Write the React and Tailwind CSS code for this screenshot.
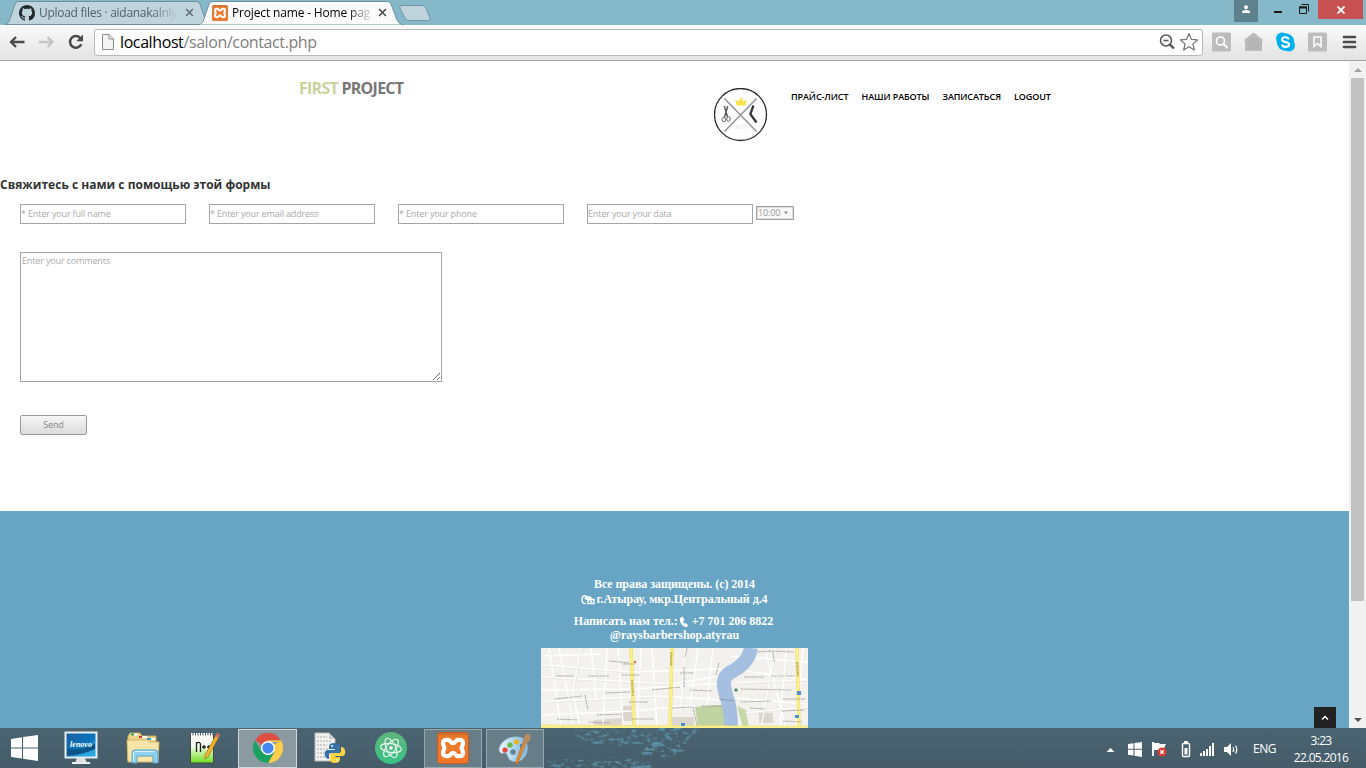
import React from "react";

const XamppGlyph = ({ className }) => (
  <svg viewBox="0 0 32 32" className={className}>
    <defs>
      <linearGradient id="xg" x1="0" y1="0" x2="0" y2="1">
        <stop offset="0" stopColor="#c9662c" />
        <stop offset="0.15" stopColor="#ee7a2a" />
        <stop offset="1" stopColor="#f0772a" />
      </linearGradient>
    </defs>
    <rect x="0.5" y="0.5" width="31" height="31" rx="3" fill="url(#xg)" stroke="#c55a1c" />
    <path
      d="M9.500 7.800h1.500c2.500 0 2.500 3.400 5 3.400s2.500-3.400 5-3.400h1.500q3.500 0 3.500 3.400c0 2.800-1.400 3-1.400 4.800s1.400 2 1.400 4.800q0 3.400-3.500 3.400h-1.500c-2.500 0-2.500-3.400-5-3.400s-2.500 3.400-5 3.400h-1.500q-3.500 0-3.500-3.400c0-2.800 1.400-3 1.400-4.800s-1.400-2-1.400-4.800q0-3.400 3.500-3.400z"
      fill="none"
      stroke="#fff"
      strokeWidth="4.200"
      strokeLinejoin="round"
    />
  </svg>
);

const Cross = ({ className }) => (
  <svg viewBox="0 0 10 10" className={className}>
    <path d="M1.200 1.200l7.600 7.600M8.800 1.200l-7.600 7.600" stroke="currentColor" strokeWidth="1.700" />
  </svg>
);

const GithubMark = () => (
  <svg viewBox="0 0 16 16" className="h-4 w-4 shrink-0" fill="#24292e">
    <path d="M8 0C3.580 0 0 3.580 0 8c0 3.540 2.290 6.530 5.470 7.590.4.070.55-.17.55-.38 0-.19-.01-.82-.01-1.490-2.010.37-2.530-.49-2.690-.94-.09-.23-.48-.94-.82-1.130-.28-.15-.68-.52-.01-.53.63-.01 1.080.58 1.230.82.72 1.210 1.870.87 2.330.66.07-.52.28-.87.51-1.070-1.780-.2-3.640-.89-3.640-3.950 0-.87.31-1.590.82-2.150-.08-.2-.36-1.020.08-2.120 0 0 .67-.21 2.200.82.64-.18 1.320-.27 2-.27s1.360.09 2 .27c1.530-1.040 2.200-.82 2.200-.82.44 1.100.16 1.920.08 2.120.51.56.82 1.270.82 2.150 0 3.070-1.870 3.750-3.650 3.950.29.25.54.73.54 1.480 0 1.070-.01 1.930-.01 2.200 0 .21.15.46.55.38A8.010 8.010 0 0 0 16 8c0-4.420-3.580-8-8-8z" />
  </svg>
);

function TabStrip() {
  return (
    <div className="flex h-[25px] bg-[#85b8c9] font-['Open_Sans',sans-serif]">
      <div className="relative ml-[5px] h-[25px] w-[200px] shrink-0">
        <svg viewBox="0 0 200 25" className="absolute inset-0 h-[25px] w-[200px]">
          <path d="M0 24.500C3 24 4 22 5 19L10 4Q11 1.500 13 1.500H191Q194 1.500 195 4L200 19V24.500z" fill="#c0d4dd" stroke="#6f8f9c" />
        </svg>
        <div className="relative flex h-[25px] items-center pl-[14px]">
          <GithubMark />
          <span className="ml-1 w-[138px] whitespace-nowrap text-[12px] leading-4 tracking-[-0.28px] text-[#536068] [mask-image:linear-gradient(to_right,#000_112px,transparent_139px)]">
            Upload files · aidanakalniy
          </span>
          <Cross className="ml-[8px] h-[9px] w-[9px] text-[#5f6b70]" />
        </div>
      </div>
      <div className="relative -ml-[7px] h-[25px] w-[206px] shrink-0">
        <svg viewBox="0 0 206 25" className="absolute inset-0 h-[25px] w-[206px]">
          <path d="M0 25C4 24 5 22 6 19L11 4Q12 1.500 15 1.500H189Q192 1.500 193 4L199 20Q201 24.500 206 25z" fill="#fbfbfb" stroke="#6f8f9c" />
        </svg>
        <div className="relative flex h-[25px] items-center pl-[14px]">
          <XamppGlyph className="h-4 w-4 shrink-0" />
          <span className="ml-1 w-[138px] whitespace-nowrap text-[12px] leading-4 tracking-[-0.16px] text-black [mask-image:linear-gradient(to_right,#000_116px,transparent_141px)]">
            Project name - Home pag
          </span>
          <Cross className="ml-[8px] h-[9px] w-[9px] text-[#444]" />
        </div>
      </div>
      <svg viewBox="0 0 34 25" className="-ml-[6px] h-[25px] w-[34px] shrink-0">
        <path d="M3 5.500H25Q27 5.500 28 8L32 18Q33 20.500 30 20.500H11Q8 20.500 7 18L2 8Q1 5.500 3 5.500z" fill="#bfd3dc" stroke="#7597a5" />
      </svg>
      <div className="ml-auto flex">
        <div className="flex h-[22px] w-6 items-start justify-center bg-[#5d818d] pt-[5px]">
          <svg viewBox="0 0 8 9" className="h-[9px] w-2" fill="#fff">
            <circle cx="4" cy="2.200" r="2" />
            <path d="M0 8V6.200Q2 5 4 5t4 1.200V8z" />
          </svg>
        </div>
        <svg viewBox="0 0 60 22" className="h-[22px] w-[60px]" fill="none" stroke="#1c1c1c">
          <path d="M16 12h8" strokeWidth="2" />
          <path d="M43.500 4.500h7v7M41.500 7.500h7v6h-7zM41 7h8" />
          <path d="M41 7.500h8" strokeWidth="2" />
        </svg>
        <div className="mr-[3px] flex h-[19px] w-[45px] items-center justify-center bg-[#c75050]">
          <svg viewBox="0 0 8 8" className="h-2 w-2">
            <path d="M.5.500l7 7M7.500.500l-7 7" stroke="#fff" strokeWidth="1.900" />
          </svg>
        </div>
      </div>
    </div>
  );
}

function Toolbar() {
  return (
    <div className="flex h-9 items-center border-b border-[#a5a5a5] bg-linear-to-b from-[#fafafa] to-[#e3e3e3] pb-px pl-2 pr-[9px] [box-shadow:inset_0_1px_0_#fff]">
      <svg viewBox="0 0 84 20" className="h-5 w-[84px]" fill="none">
        <path d="M8 5L3 10 8 15M3.500 10h13" stroke="#4b4b4b" strokeWidth="2.400" />
        <path d="M39.500 5L44.500 10l-5 5M44 10H31" stroke="#c4c4c4" strokeWidth="2.400" />
        <path d="M72.600 6.200A5.900 5.900 0 1 0 73.300 12.300" stroke="#4b4b4b" strokeWidth="2.500" />
        <path d="M75 2.500v6.800h-6.800z" fill="#4b4b4b" />
      </svg>
      <div className="ml-[2px] flex h-[27px] flex-1 items-center rounded-[3px] border border-[#b8b8b8] bg-white pl-[7px] pr-[3px]">
        <svg viewBox="0 0 12 16" className="h-4 w-3" fill="#f5f5f5" stroke="#8b8b8b">
          <path d="M.5.500h6.500l4.500 4.500v10.500H.5zM7 .5V5h4.500" />
        </svg>
        <span className="ml-[6px] whitespace-nowrap font-['Open_Sans',sans-serif] text-[16px] leading-5 tracking-[-0.4px] text-[#808080]">
          <span className="text-black">localhost</span>/salon/contact.php
        </span>
        <svg viewBox="0 0 18 18" className="ml-auto h-[18px] w-[18px]" fill="none" stroke="#555">
          <circle cx="8" cy="7.500" r="5.500" strokeWidth="1.500" />
          <path d="M5.500 7.500h5" strokeWidth="1.600" />
          <path d="M11.800 11.300L16 15.500" strokeWidth="2.400" />
        </svg>
        <svg viewBox="0 0 20 20" className="ml-[3px] h-5 w-5" fill="#fff" stroke="#747474" strokeWidth="1.200" strokeLinejoin="round">
          <path d="M10 1.600l2.400 5.800 6.200.5-4.700 4.100 1.500 6.100-5.400-3.300-5.400 3.300 1.500-6.100L1.400 7.900l6.200-.5z" />
        </svg>
      </div>
      <svg viewBox="0 0 147 20" className="ml-[7px] h-5 w-[147px]" fill="none">
        <rect x="2" y=".5" width="19" height="19" rx="1.500" fill="#bcbcbc" />
        <circle cx="10.500" cy="9" r="4" stroke="#fff" strokeWidth="1.600" />
        <path d="M13.500 12l4 4" stroke="#fff" strokeWidth="2" />
        <path d="M43.500.500l9.500 7.500-1 2v9H35v-9l-1-2z" fill="#bababa" />
        <circle cx="43.500" cy="11.500" r="5" stroke="#a9a9a9" />
        <circle cx="43.500" cy="11.500" r="2.300" stroke="#a9a9a9" />
        <circle cx="72" cy="6.500" r="6" fill="#00aff0" />
        <circle cx="79" cy="13.500" r="6" fill="#00aff0" />
        <circle cx="75.500" cy="10" r="8.700" fill="#00aff0" />
        <path d="M79 7.200Q78 5.300 75.200 5.300 72 5.300 72 7.600 72 9.300 75.500 10t3.600 2.500q0 2.400-3.500 2.400-3 0-3.900-2.300" stroke="#fff" strokeWidth="2.100" />
        <rect x="98" y=".5" width="19" height="19" rx="1.500" fill="#bcbcbc" />
        <path d="M104 5h7v9.500l-3.500-3-3.500 3z" stroke="#fff" strokeWidth="1.500" />
        <path d="M134 5h11M134 10h11M134 15h11" stroke="#4b4b4b" strokeWidth="2.700" strokeLinecap="round" />
      </svg>
    </div>
  );
}

function BarberLogo() {
  return (
    <svg viewBox="0 0 54 54" className="h-[54px] w-[54px]" fill="none">
      <circle cx="26.500" cy="26.500" r="26" stroke="#2b2b2b" strokeWidth="1.300" />
      <path d="M10.500 10.500l32 33M42.500 10.500L10.500 43.500" stroke="#999" strokeWidth="1.700" />
      <path d="M22.500 17.500l-1.300-6 3.300 2L27 9l2.500 4.500 3.300-2-1.300 6z" fill="#fbe14b" />
      <path d="M10.300 18l3.200 11M13.800 18l-3.200 11" stroke="#555" strokeWidth="1.400" />
      <ellipse cx="9.800" cy="31.500" rx="1.800" ry="2.300" stroke="#666" />
      <ellipse cx="14.500" cy="31" rx="1.800" ry="2.300" stroke="#666" />
      <path d="M39.500 17.500L36.300 26l6.200 8.500" stroke="#333" strokeWidth="2.200" />
      <text x="27" y="41" textAnchor="middle" fontFamily="Open Sans" fontSize="5" fill="#dedede">2015</text>
    </svg>
  );
}

function Header() {
  return (
    <header className="flex h-[116px] font-['Open_Sans',sans-serif]">
      <h1 className="ml-[299px] mt-[17px] w-[415px] text-[16px] font-bold leading-5 tracking-[-0.74px] text-[#777]">
        <span className="text-[#c9d19b]">FIRST</span> PROJECT
      </h1>
      <div className="mt-[27px]"><BarberLogo /></div>
      <nav className="ml-[23px] mt-[30px] flex h-3 gap-[13px] whitespace-nowrap text-[9px] font-semibold leading-3 tracking-[-0.08px] text-black">
        <a>ПРАЙС-ЛИСТ</a>
        <a>НАШИ РАБОТЫ</a>
        <a>ЗАПИСАТЬСЯ</a>
        <a>LOGOUT</a>
      </nav>
    </header>
  );
}

const fields = ["* Enter your full name", "* Enter your email address", "* Enter your phone", "Enter your your data"];

function ContactForm() {
  return (
    <form className="h-[334px] font-['Open_Sans',sans-serif] text-[9px] tracking-[-0.15px]">
      <h2 className="text-[12px] font-bold leading-4 tracking-[0.01px] text-[#333]">
        Свяжитесь с нами с помощью этой формы
      </h2>
      <div className="ml-5 mt-[11px] flex">
        {fields.map((label) => (
          <input
            key={label}
            placeholder={label}
            className="mr-[23px] block h-5 w-[166px] border border-[#a5a5a5] bg-white p-0 pb-[2px] leading-4 placeholder:text-[#a9a9a9] last-of-type:mr-[3px]"
          />
        ))}
        <div className="mt-[2px] flex h-[14px] w-[38px] items-center border border-[#a0a0a0] bg-[#f8f8f8] pl-px text-[#999] shadow-[inset_0_0_0_1px_#ddd]">
          10:00
          <svg viewBox="0 0 4 4" className="ml-[4px] h-1 w-1" fill="#777"><path d="M.3.500h3.400L2 3.300z" /></svg>
        </div>
      </div>
      <textarea
        placeholder="Enter your comments"
        className="ml-5 mt-7 block h-[130px] w-[422px] border border-[#a5a5a5] bg-white px-px py-[2px] leading-3 placeholder:text-[#a9a9a9]"
      />
      <button type="button" className="ml-5 mt-[33px] block h-5 w-[67px] rounded-[2px] border border-[#999] bg-linear-to-b from-[#f6f6f6] to-[#dcdcdc] leading-[18px] text-[#888]">
        Send
      </button>
    </form>
  );
}

function CityMap() {
  return (
    <svg viewBox="0 0 267 80" className="h-20 w-[267px]" fill="none">
      <rect width="267" height="80" fill="#f3f1ed" />
      <path d="M154 59l39-3 2 24h-38z" fill="#bfd4a0" />
      <path d="M196 58l9 4 3 18h-6z" fill="#c6d9aa" />
      <path d="M82 58h10v15H80zM53 72l28-2v10H52zM131 69h22v11h-22zM218 65h14v10h-14z" fill="#dcd6cf" />
      <g stroke="#fff" strokeWidth="1.300">
        <path d="M0 17l90 7 90-3M0 29l130 7 50-8M0 42l90-1 92-6M0 54l120-6 62 4M0 67l90-4 65-6M185 20l82 12M195 35l72-3M195 50l72 6M205 65l62-6M190 8l77 6M0 8l60-2" />
        <path d="M8 0l12 78M18 0l14 75M40 0l-8 45 6 30M50 0l5 50M66 0l-4 76M77 0l5 75M100 0l-4 80M111 0l5 80M145 0l-5 65M157 0l-8 58M172 0l-6 58M235 0l-14 75M245 0l-6 78M225 5l20 75M262 0l-7 80" />
      </g>
      <g stroke="#dddad5" strokeWidth=".5">
        <path d="M0 18l90 7M0 30l130 7M0 55l120-6M195 36l72-3M205 66l62-6M41 0l-8 45M146 0l-5 65M236 0l-14 75" />
      </g>
      <path d="M210 0Q208 14 192 23C180 28 182 38 186 50Q190 62 190 80" stroke="#a4bfdf" strokeWidth="14" />
      <path d="M90 0l3 78M131 0l-2 80M256 0l2 80M0 78.500l267 1" stroke="#e9d86a" strokeWidth="3.400" />
      <path d="M90 0l3 78M131 0l-2 80M256 0l2 80M0 78.500l267 1" stroke="#fbf08a" strokeWidth="2.600" />
      <g stroke="#77736f" strokeWidth="1" strokeDasharray="2 .6 3 .5 1 .5" opacity=".55">
        <path d="M68 13l20 2M82 16h12M15 28h18M48 28h20M81 27h18M14 51l27-3M64 45l25-1M111 42l28-3M56 67l25-1M131 60l20-1M16 71l20 1M139 25h14M149 42l22 1M200 41l50 1M203 29h20M230 28h24M217 4l12-1M228 3l25 1M200 54l30-1M178 51l16 2M161 58h20M209 60l15 1M242 51h23M241 63l23-1M91 71h22M48 74l20 1M143 19v20M44 47l3 15M175 27l3-12M146 0l-2 9M152 59l4 19M232 4l1 10M242 73l19 1M88 54h19" />
        <path d="M91 32l1 16M130.500 4l-.5 14M256 14l1 15" stroke="#9a842b" strokeWidth="2" />
      </g>
      <g fill="#4d8fd0"><rect x="140" y="75" width="4" height="3" /><rect x="256" y="43" width="4" height="4" /><rect x="254" y="67" width="4" height="3" /><circle cx="195" cy="42" r="1.700" fill="#4e8c6c" /><circle cx="94" cy="14" r="1.200" fill="#c17a36" /></g>
    </svg>
  );
}

function Footer() {
  return (
    <footer className="flex h-[217px] flex-col items-center bg-[#68a4c4] font-['Liberation_Serif',serif] text-[12px] font-bold tracking-[-0.06px] text-white">
      <p className="mt-[66px] h-[15px] whitespace-nowrap leading-[15px]">Все права защищены. (с) 2014</p>
      <p className="flex h-[15px] items-center whitespace-nowrap leading-[15px]">
        <svg viewBox="0 0 15 10" className="h-[10px] w-[15px]" fill="none" stroke="#fff" strokeWidth="1.400">
          <path d="M5 1Q1 0 1 4.500T5 8.500M4 2h5l2 2M7 4v4.500h6V4.500H9M9 6.500h2" />
          <path d="M4 2.500l5 2" strokeWidth="3" />
        </svg>
        г.Атырау, мкр.Центральный д.4
      </p>
      <p className="mt-[7px] flex h-[15px] items-center whitespace-nowrap pr-[2px] leading-[15px] tracking-[-0.03px]">
        Написать нам тел.:
        <svg viewBox="0 0 10 12" className="mx-px h-3 w-[10px]" fill="#fff">
          <path d="M3.500.500L1 2C0 6 3 10 7 11.500L9.500 9.500 6.700 7 5.500 7.800Q4.300 6.500 4.200 5L5.500 4z" />
        </svg>
        <span className="ml-[2px]">+7 701 206 8822</span>
      </p>
      <p className="h-[14px] leading-[13px] tracking-normal">@raysbarbershop.atyrau</p>
      <div className="mt-[5px] h-20 w-[267px]"><CityMap /></div>
    </footer>
  );
}

const WindowsMark = ({ className }) => (
  <svg viewBox="0 0 27 26" className={className} fill="#fff">
    <path d="M0 4l11-1.700v10.200H0zM12 2.100L27 0v12.500H12zM0 13.500h11v10L0 22zM12 13.500h15V26l-15-2.200z" />
  </svg>
);

const LenovoIcon = () => (
  <svg viewBox="0 0 34 34" className="h-[34px] w-[34px]">
    <defs><linearGradient id="lg" x1="0" y1="0" x2="1" y2="1"><stop stopColor="#1c5f9d" /><stop offset=".55" stopColor="#0874bd" /><stop offset="1" stopColor="#45bdf0" /></linearGradient></defs>
    <path d="M13 27h8l2 5H11z" fill="#dce1e3" /><path d="M8 32h18" stroke="#eee" strokeWidth="2" />
    <rect x="1.500" y="1.500" width="31" height="25" fill="url(#lg)" stroke="#e8eef0" strokeWidth="2" />
    <path d="M3 18Q18 20 31 13v12H3z" fill="#0c5488" />
    <path d="M3 25Q18 24 31 18v7z" fill="#28a6e0" />
    <text x="17" y="15.500" textAnchor="middle" fontFamily="Liberation Serif" fontSize="8" fontWeight="700" fontStyle="italic" fill="#fff">lenovo</text>
  </svg>
);

const FolderIcon = () => (
  <svg viewBox="0 0 34 32" className="h-8 w-[34px]">
    <path d="M2 4l2-3h10l2 3h14v24H2z" fill="#efd489" stroke="#c4a65a" />
    <path d="M5 2.500h7M13 5h8M21 7h8" stroke="#fff" strokeWidth="2" />
    <path d="M5 2.500h3" stroke="#1ca34a" strokeWidth="2" /><path d="M13 5h3" stroke="#d8382d" strokeWidth="2" /><path d="M21 7h4" stroke="#2a9be0" strokeWidth="2" />
    <path d="M1 8h20l2 2h10l-1 20H2z" fill="#f7e5a9" stroke="#d4b96e" />
    <path d="M6 31V21q0-3 3-3h20q3 0 3 3v10h-5v-7H11v7z" fill="#8fd0ee" stroke="#5aa3c8" />
    <path d="M7.500 29v-8q0-1.500 2-1.500h19" fill="none" stroke="#d8f2fb" />
  </svg>
);

const NotepadIcon = () => (
  <svg viewBox="0 0 32 32" className="h-8 w-8">
    <defs><linearGradient id="ng" x1="0" y1="0" x2="0" y2="1"><stop stopColor="#fff" /><stop offset=".4" stopColor="#f3faeb" /><stop offset="1" stopColor="#6fe01b" /></linearGradient></defs>
    <rect x="1.500" y="3" width="23" height="28" fill="url(#ng)" stroke="#444" />
    <path d="M2 2.500h22" stroke="#fff" strokeWidth="3" strokeDasharray="1.500 1" />
    <path d="M7.500 20V10M7.500 11q4-2 4 2v7M13 15h4M15 13v4M18 15h4M20 13v4" fill="none" stroke="#222" strokeWidth="1.300" />
    <path d="M28 1l3 2-12 22-3 2 0-4z" fill="#f1b62c" stroke="#996d21" strokeWidth=".7" /><path d="M28 1l3 2-2 3-3-2z" fill="#c96d6d" />
  </svg>
);

const ChromeIcon = () => (
  <svg viewBox="0 0 30 30" className="h-[30px] w-[30px]">
    <path d="M15 15L2 7.500A15 15 0 0 1 28 7.500H15z" fill="#dd4f43" />
    <path d="M15 15L28 7.500A15 15 0 0 1 15 30L21.500 18.700z" fill="#fccd48" />
    <path d="M15 15l6.500 3.700L15 30A15 15 0 0 1 2 7.500l6.500 11.200z" fill="#1aa260" />
    <path d="M15 7.500h13A15 15 0 0 1 29 9H15z" fill="#fccd48" />
    <circle cx="15" cy="15" r="7" fill="#fff" /><circle cx="15" cy="15" r="5.600" fill="#4688f1" />
  </svg>
);

const PythonIcon = () => (
  <svg viewBox="0 0 32 32" className="h-8 w-8">
    <path d="M1 1h14l6 6v22H1z" fill="#f1f1ef" stroke="#bbb" /><path d="M15 1v6h6z" fill="#ccc" />
    <path d="M3 5h10M3 9h14M3 13h10M3 17h12M3 21h8M3 25h9" stroke="#aaa" strokeDasharray="2 1" />
    <path d="M20 11q-5 0-5 4v2h6v1h-8q-3 1-2 6 1 3 4 3v-4q0-2 3-2h5q3 0 3-3v-3q0-4-6-4z" fill="#3773a6" />
    <path d="M21 31q5 0 5-4v-2h-5v-1h7q4 0 3-6-1-3-4-3v4q0 2-3 2h-5q-3 0-3 3v3q0 4 5 4z" fill="#ffd440" />
    <circle cx="18" cy="14" r="1" fill="#fff" /><circle cx="23.500" cy="28" r="1" fill="#fff" />
  </svg>
);

const AtomIcon = () => (
  <svg viewBox="0 0 32 32" className="h-8 w-8" fill="none">
    <defs><linearGradient id="ag" x1="0" y1="0" x2="0" y2="1"><stop stopColor="#5fb57d" /><stop offset="1" stopColor="#38c284" /></linearGradient></defs>
    <circle cx="16" cy="16" r="16" fill="url(#ag)" />
    <g stroke="#e5f6eb" strokeWidth="1.200"><ellipse cx="16" cy="16" rx="4.500" ry="10.500" transform="rotate(-25 16 16)" /><ellipse cx="16" cy="16" rx="4.500" ry="10.500" transform="rotate(38 16 16)" /><ellipse cx="16" cy="16" rx="4.500" ry="10.500" transform="rotate(98 16 16)" /></g>
    <circle cx="16" cy="16" r="1.800" fill="#fff" />
  </svg>
);

const PaintIcon = () => (
  <svg viewBox="0 0 34 32" className="h-8 w-[34px]">
    <defs><linearGradient id="pg"><stop stopColor="#eef6fc" /><stop offset="1" stopColor="#73b7e4" /></linearGradient></defs>
    <path d="M18 5C6 5-1 15 2 20c2 3 5-1 7 2s0 5 6 7c9 2 15-6 14-15Q28 5 18 5z" fill="url(#pg)" stroke="#a6c9dd" />
    <circle cx="15" cy="20" r="2.700" fill="#668392" />
    <circle cx="7" cy="18" r="2.600" fill="#e54639" /><circle cx="12" cy="13" r="2.600" fill="#63bb3c" /><circle cx="18.500" cy="10" r="2.700" fill="#eab62c" /><circle cx="24" cy="14" r="2.300" fill="#318fd2" />
    <path d="M25 10l3 1-8 20-3 1z" fill="#e98930" stroke="#b35d18" strokeWidth=".5" />
    <path d="M25 10q-1-5 5-9l3 4q-1 5-5 6z" fill="#b98b5f" />
  </svg>
);

// Water glints of the wallpaper, seen through the translucent bar.
const WaterGlints = () => (
  <svg viewBox="0 0 200 40" className="absolute left-[545px] top-0 h-10 w-[200px]">
    <defs>
      <filter id="ripple" x="0" y="0" width="200" height="40" filterUnits="userSpaceOnUse" colorInterpolationFilters="sRGB">
        <feTurbulence type="fractalNoise" baseFrequency="0.15 0.3" numOctaves="4" seed="8" />
        <feColorMatrix values="0 0 0 0 0.38  0 0 0 0 0.66  0 0 0 0 0.74  4 0 0 0 -2" result="noise" />
        <feComposite in="noise" in2="SourceAlpha" operator="in" />
      </filter>
    </defs>
    <path d="M28 0h128l-12 10-6 10-12 10-22-2-24-9-22-3-18 1-10-9zM0 38l20-7 20 1 24-3 24 2 16 3 4 6H0zM0 32l16 1-6 7H0z" filter="url(#ripple)" opacity=".65" />
    <path d="M107 14l10 1 3 3-13 1zM128 21l13 1-6 2-7-1zM97 24h11l-1 2-10 1zM86 38l20-1v3H85z" fill="#65aec5" opacity=".5" />
  </svg>
);

function Taskbar() {
  return (
    <div className="relative flex h-10 bg-linear-to-b from-[#4a6472] to-[#465c69] font-['Open_Sans',sans-serif] text-white">
      <WaterGlints />
      <div className="relative flex h-10 items-center">
        <div className="ml-[11px] w-[27px]"><WindowsMark className="h-[26px] w-[27px]" /></div>
        <div className="ml-[26px]"><LenovoIcon /></div>
        <div className="ml-[28px]"><FolderIcon /></div>
        <div className="ml-[29px]"><NotepadIcon /></div>
        <div className="ml-[17px] flex h-[39px] w-[59px] items-center justify-center border border-[#d1d8dc] bg-[#8b99a1]"><ChromeIcon /></div>
        <div className="ml-[17px]"><PythonIcon /></div>
        <div className="ml-[29px]"><AtomIcon /></div>
        <div className="ml-[17px] flex h-[39px] w-[58px] items-center justify-center border border-[#98a6ae] bg-[#677d88]"><XamppGlyph className="h-8 w-8" /></div>
        <div className="ml-[4px] flex h-[39px] w-[58px] items-center justify-center border border-[#98a6ae] bg-[#677d88]"><PaintIcon /></div>
      </div>
      <div className="ml-auto mr-[17px] flex items-center pt-px">
        <svg viewBox="0 0 140 20" className="h-5 w-[140px]" fill="none">
          <path d="M6.500 13l4-4 4 4z" fill="#fff" />
          <path d="M28 5l5.500-.8v5.600H28zM34.500 4L42 3v6.800h-7.500zM28 10.800h5.500v5.700l-5.500-.8zM34.500 10.800H42V18l-7.500-1.200z" fill="#fff" />
          <path d="M53 3v14" stroke="#fff" strokeWidth="2" /><path d="M54 4h5l1 1h6l-2 4 1 3h-5l-1-1h-5z" fill="#fff" />
          <circle cx="62" cy="13" r="4.500" fill="#dc3c32" /><path d="M60.300 11.300l3.400 3.400M63.700 11.300l-3.400 3.400" stroke="#fff" strokeWidth="1.300" />
          <rect x="82.500" y="4.500" width="7" height="13" rx="1" stroke="#fff" strokeWidth="1.400" /><path d="M84 3h4" stroke="#fff" strokeWidth="2" /><path d="M84.500 9h3v6.500h-3z" fill="#fff" />
          <path d="M100 14h2v3h-2zM103 12h2v5h-2zM106 10h2v7h-2zM109 7h2v10h-2zM112 4h2v13h-2z" fill="#fff" />
          <path d="M124 8h3l4-4v13l-4-4h-3z" fill="#fff" /><path d="M133 8q1.500 2.500 0 5M135.500 6.500q2.500 4 0 8" stroke="#fff" strokeWidth="1.200" />
        </svg>
        <span className="ml-[13px] w-[24px] text-[12px] leading-4 tracking-[-0.5px]">ENG</span>
        <div className="ml-[16px] w-[56px] whitespace-nowrap text-center text-[12px] leading-[17px] tracking-[-0.68px]">
          <div>3:23</div>
          <div>22.05.2016</div>
        </div>
      </div>
    </div>
  );
}

export default function App() {
  return (
    <div className="flex h-[768px] w-[1366px] flex-col overflow-hidden bg-white">
      <TabStrip />
      <Toolbar />
      <div className="relative flex h-[667px]">
        <main className="w-[1349px] overflow-hidden">
          <Header />
          <ContactForm />
          <Footer />
        </main>
        <div className="flex w-[17px] flex-col items-center bg-[#f1f1f1]">
          <div className="flex h-[17px] items-center"><svg viewBox="0 0 8 4" className="h-1 w-2" fill="#a3a3a3"><path d="M0 4l4-4 4 4z" /></svg></div>
          <div className="h-[523px] w-[13px] bg-[#c1c1c1]" />
          <div className="mt-auto flex h-[17px] items-center"><svg viewBox="0 0 8 4" className="h-1 w-2" fill="#505050"><path d="M0 0h8L4 4z" /></svg></div>
        </div>
        <div className="absolute bottom-0 right-[30px] flex h-[21px] w-[22px] items-center justify-center bg-[#222]">
          <svg viewBox="0 0 8 6" className="h-[6px] w-2" fill="none" stroke="#fff" strokeWidth="1.500"><path d="M1 4.500l3-3 3 3" /></svg>
        </div>
      </div>
      <Taskbar />
    </div>
  );
}
